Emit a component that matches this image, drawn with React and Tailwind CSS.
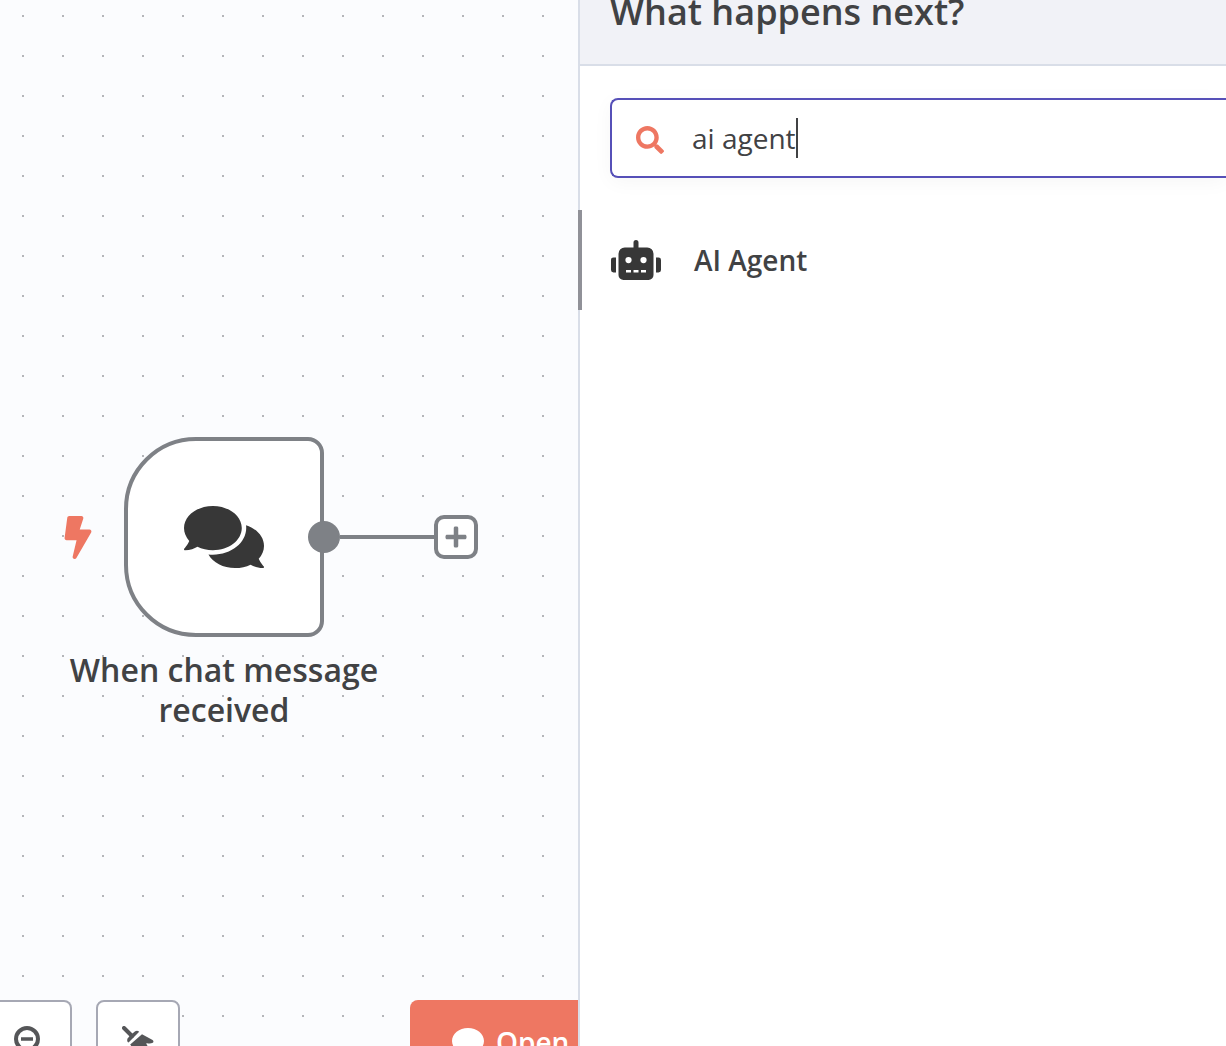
import { FaBolt, FaComment, FaComments, FaPlus, FaRobot, FaSearch } from "react-icons/fa";

function ZoomOutIcon() {
  return (
    <svg className="absolute top-6 right-[26px] size-[30px]" viewBox="0 0 30 30" fill="none" stroke="currentColor" aria-hidden="true">
      <circle cx="13" cy="13" r="11" strokeWidth="4" />
      <path d="M7 13h12" strokeWidth="3.5" />
      <path d="M21 21l6 6" strokeWidth="5" strokeLinecap="round" />
    </svg>
  );
}

function TidyIcon() {
  return (
    <svg className="absolute top-6 left-6 size-9" viewBox="0 0 36 36" fill="currentColor" aria-hidden="true">
      <path d="M2 2L10 10" fill="none" stroke="currentColor" strokeWidth="4" strokeLinecap="round" />
      <path d="M8 9.500L13.200 5.200Q15.400 4 17.200 5.800L6.600 16.600Q4.400 15.200 5.600 12.400Z" />
      <path d="M20 8.200L30.600 14Q32.200 15.400 30.800 16.800Q28 18.200 24.400 17Q24.400 18.800 26.400 21L18 32L8.200 18.600Z" />
    </svg>
  );
}

function TriggerNode() {
  return (
    <div className="absolute top-[437px] left-[124px] size-[200px]">
      <FaBolt className="absolute top-[79px] -left-[66px] h-[43px] w-10 text-[#ee7762]" aria-hidden="true" />
      <div className="flex size-full items-center justify-center rounded-l-[72px] rounded-r-[16px] border-4 border-[#7e8186] bg-white">
        <FaComments className="size-20 text-[#373737]" aria-hidden="true" />
      </div>
      <div className="absolute top-[84px] left-[184px] flex items-center">
        <span className="size-8 rounded-full bg-[#7e8186]" />
        <span className="h-1 w-[94px] bg-[#7e8186]" />
      </div>
      <button
        type="button"
        aria-label="Add node"
        className="absolute top-[78px] left-[310px] flex size-11 items-center justify-center rounded-[10px] border-4 border-[#7e8186] bg-white text-[#7e8186]"
      >
        <FaPlus className="size-6" />
      </button>
      <p className="absolute top-[213px] left-1/2 w-[320px] -translate-x-1/2 text-center text-[32px] leading-10 font-semibold text-[#414244]">
        When chat message received
      </p>
    </div>
  );
}

function Canvas() {
  return (
    <main className="relative flex min-w-0 flex-col overflow-hidden bg-[#fbfcfe]">
      <svg className="absolute inset-0 size-full" aria-hidden="true">
        <defs>
          <pattern id="dots" width="40" height="40" x="22" y="15" patternUnits="userSpaceOnUse">
            <rect width="2" height="2" fill="#b4b5b9" />
          </pattern>
        </defs>
        <rect width="100%" height="100%" fill="url(#dots)" />
      </svg>
      <div className="relative flex-1">
        <TriggerNode />
      </div>
      <div className="relative flex h-[46px] justify-between">
        <div className="flex gap-6">
          <button
            type="button"
            aria-label="Zoom out"
            className="relative h-[84px] w-[72px] rounded-tr-lg border-2 border-l-0 border-[#a6a8b4] bg-white text-[#555658]"
          >
            <ZoomOutIcon />
          </button>
          <button
            type="button"
            aria-label="Tidy up"
            className="relative size-[84px] rounded-lg border-2 border-[#a6a8b4] bg-white text-[#555658]"
          >
            <TidyIcon />
          </button>
        </div>
        <button
          type="button"
          className="flex h-[84px] w-[168px] items-center gap-3 rounded-l-lg bg-[#ee7762] pl-[42px] text-[28px] font-semibold whitespace-nowrap text-white"
        >
          <FaComment className="size-8 shrink-0" aria-hidden="true" />
          Open
        </button>
      </div>
    </main>
  );
}

function NodePanel() {
  return (
    <aside className="relative min-w-0 border-l-2 border-[#d9dee8] bg-white">
      <header className="h-[66px] overflow-hidden border-b-2 border-[#d9dee8] bg-[#f1f2f7] pl-[30px]">
        <h1 className="-mt-3 text-[36px] leading-[48px] font-semibold whitespace-nowrap text-[#414244]">What happens next?</h1>
      </header>
      <div className="overflow-hidden pt-8 pb-8 pl-[30px]">
        <label className="flex h-20 items-center rounded-l-lg border-2 border-r-0 border-[#5650b8] bg-white pl-6 shadow-[0_4px_20px_rgba(0,0,0,0.04)]">
          <FaSearch className="mt-1 size-7 shrink-0 text-[#ee7762]" aria-hidden="true" />
          <input
            type="text"
            aria-label="Search nodes"
            defaultValue="ai agent"
            className="ml-7 field-sizing-content p-0 text-[28px] leading-10 text-[#414244] caret-transparent outline-none"
          />
          <span className="h-10 w-0.5 bg-[#414244]" />
        </label>
      </div>
      <button type="button" className="relative flex h-[100px] w-full items-center gap-[33px] pl-[31px] text-left">
        <span className="absolute inset-y-0 -left-0.5 w-1 bg-[#909198]" />
        <FaRobot className="size-[50px] shrink-0 text-[#373737]" aria-hidden="true" />
        <span className="text-[28px] leading-10 font-semibold text-[#414244]">AI Agent</span>
      </button>
    </aside>
  );
}

export default function App() {
  return (
    <div className="grid h-screen grid-cols-[minmax(0,578fr)_minmax(0,648fr)] overflow-hidden font-['Open_Sans',sans-serif]">
      <Canvas />
      <NodePanel />
    </div>
  );
}
